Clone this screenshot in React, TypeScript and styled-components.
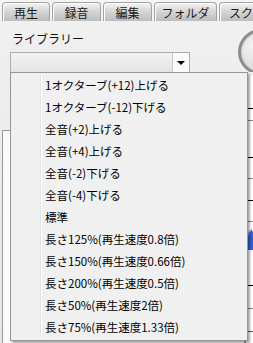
import React from "react";
import styled, { createGlobalStyle } from "styled-components";

const GlobalStyle = createGlobalStyle`
  html, body {
    margin: 0;
    padding: 0;
    background: #f0f0f0;
  }
  body {
    font-family: "Noto Sans CJK JP", "Noto Sans", sans-serif;
    font-size: 12px;
    color: #000;
  }
`;

const Screen = styled.div`
  position: relative;
  width: 253px;
  height: 343px;
  overflow: hidden;
  background: #f0f0f0;
`;

const TabBar = styled.div`
  display: flex;
  align-items: flex-end;
  gap: 2px;
  height: 21px;
  padding-left: 2px;
  box-sizing: border-box;
  background: #f4f4f4;
  white-space: nowrap;
  overflow: hidden;
`;

const Tab = styled.div<{ $w: number; $start?: boolean }>`
  flex: 0 0 ${(p) => p.$w}px;
  height: 19px;
  box-sizing: border-box;
  border: 1px solid #a2a2a2;
  border-bottom: none;
  border-radius: 4px 4px 0 0;
  background: linear-gradient(#f5f5f5, #d6d6d6 45%, #bdbdbd);
  box-shadow: inset 1px 1px 0 #ffffff;
  display: flex;
  align-items: center;
  justify-content: ${(p) => (p.$start ? "flex-start" : "center")};
  padding-left: ${(p) => (p.$start ? "9px" : "0")};
  overflow: hidden;
  font-size: 12px;
  line-height: 1;
  color: #1a1a1a;
  padding-top: 1px;
`;

const Body = styled.div`
  height: 322px;
  display: flex;
  flex-direction: column;
  background: linear-gradient(#f0f0f0, #e6e6e6);
`;

const Header = styled.div`
  display: flex;
  height: 51px;
`;

const LeftCol = styled.div`
  flex: 1;
  padding-left: 10px;
`;

const Label = styled.div`
  margin: 11px 0 0 2px;
  height: 20px;
  line-height: 14px;
  font-size: 12px;
  color: #111;
`;

const Combo = styled.div`
  width: 180px;
  height: 21px;
  box-sizing: border-box;
  border: 1px solid #adadad;
  background: linear-gradient(#f2f2f2, #e4e4e4);
  display: flex;
  justify-content: flex-end;
`;

const ComboButton = styled.div`
  width: 16px;
  border-left: 1px solid #c8c8c8;
  background: #fafafa;
  display: flex;
  align-items: center;
  justify-content: center;
  &::after {
    content: "";
    border-left: 4px solid transparent;
    border-right: 4px solid transparent;
    border-top: 4px solid #000;
    margin-top: 1px;
  }
`;

const RightCol = styled.div`
  width: 15px;
  overflow: hidden;
`;

const Knob = styled.div`
  width: 46px;
  height: 46px;
  margin-top: 8px;
  border-radius: 50%;
  box-sizing: border-box;
  border: 3px solid #8c8c8c;
  background: radial-gradient(circle at 40% 35%, #f6f6f6, #d0d0d0);
  box-shadow: inset 0 0 0 1px #c9c9c9;
`;

const Lower = styled.div`
  flex: 1;
  display: flex;
`;

const ListPanel = styled.div`
  flex: 1;
  margin: 58px 0 0 2px;
  border: 1px solid #9a9a9a;
  border-bottom: none;
  background: #fbfbfb;
`;

const GraphStrip = styled.div`
  width: 7px;
  margin-top: 3px;
  border-left: 1px solid #9a9a9a;
  background: #ffffff;
`;

const Menu = styled.div`
  position: absolute;
  top: 72px;
  left: 10px;
  width: 238px;
  height: 269px;
  box-sizing: border-box;
  padding: 1px 2px;
  border: 1px solid #979797;
  background: #f0f0f0;
  box-shadow: 2px 2px 2px rgba(0, 0, 0, 0.35);
  &::before {
    content: "";
    position: absolute;
    left: 29px;
    top: 2px;
    bottom: 2px;
    width: 1px;
    background: #e2e3e3;
    border-right: 1px solid #ffffff;
  }
`;

const Item = styled.div`
  height: 22px;
  line-height: 22px;
  padding-left: 32px;
  font-size: 11.5px;
  white-space: nowrap;
  color: #000;
`;

const tabs = [
  { label: "再生", w: 48 },
  { label: "録音", w: 49 },
  { label: "編集", w: 49 },
  { label: "フォルダ", w: 63 },
  { label: "スク", w: 60, start: true },
];

const items = [
  "1オクターブ(+12)上げる",
  "1オクターブ(-12)下げる",
  "全音(+2)上げる",
  "全音(+4)上げる",
  "全音(-2)下げる",
  "全音(-4)下げる",
  "標準",
  "長さ125%(再生速度0.8倍)",
  "長さ150%(再生速度0.66倍)",
  "長さ200%(再生速度0.5倍)",
  "長さ50%(再生速度2倍)",
  "長さ75%(再生速度1.33倍)",
];

// horizontal ticks of the level graph, y relative to the strip top (75)
const ticks = [
  { y: 33, c: "#000" },
  { y: 45, c: "#888" },
  { y: 82, c: "#000" },
  { y: 103, c: "#888" },
  { y: 125, c: "#000" },
  { y: 146, c: "#888" },
  { y: 210, c: "#000" },
  { y: 233, c: "#888" },
  { y: 256, c: "#555" },
];

function Graph() {
  return (
    <svg width="7" height="268" viewBox="0 0 7 268">
      {ticks.map((t) => (
        <rect key={t.y} x="0" y={t.y} width="7" height="1" fill={t.c} />
      ))}
      <path d="M0 160 L1 156 L2 162 L3 155 L4 158 L5 154 L7 157 L7 175 L0 175 Z" fill="#2f5fd0" />
    </svg>
  );
}

export default function App() {
  return (
    <>
      <GlobalStyle />
      <Screen>
        <TabBar>
          {tabs.map((t) => (
            <Tab key={t.label} $w={t.w} $start={t.start}>
              {t.label}
            </Tab>
          ))}
        </TabBar>
        <Body>
          <Header>
            <LeftCol>
              <Label>ライブラリー</Label>
              <Combo>
                <ComboButton />
              </Combo>
            </LeftCol>
            <RightCol>
              <Knob />
            </RightCol>
          </Header>
          <Lower>
            <ListPanel />
            <GraphStrip>
              <Graph />
            </GraphStrip>
          </Lower>
        </Body>
        <Menu>
          {items.map((it) => (
            <Item key={it}>{it}</Item>
          ))}
        </Menu>
      </Screen>
    </>
  );
}
